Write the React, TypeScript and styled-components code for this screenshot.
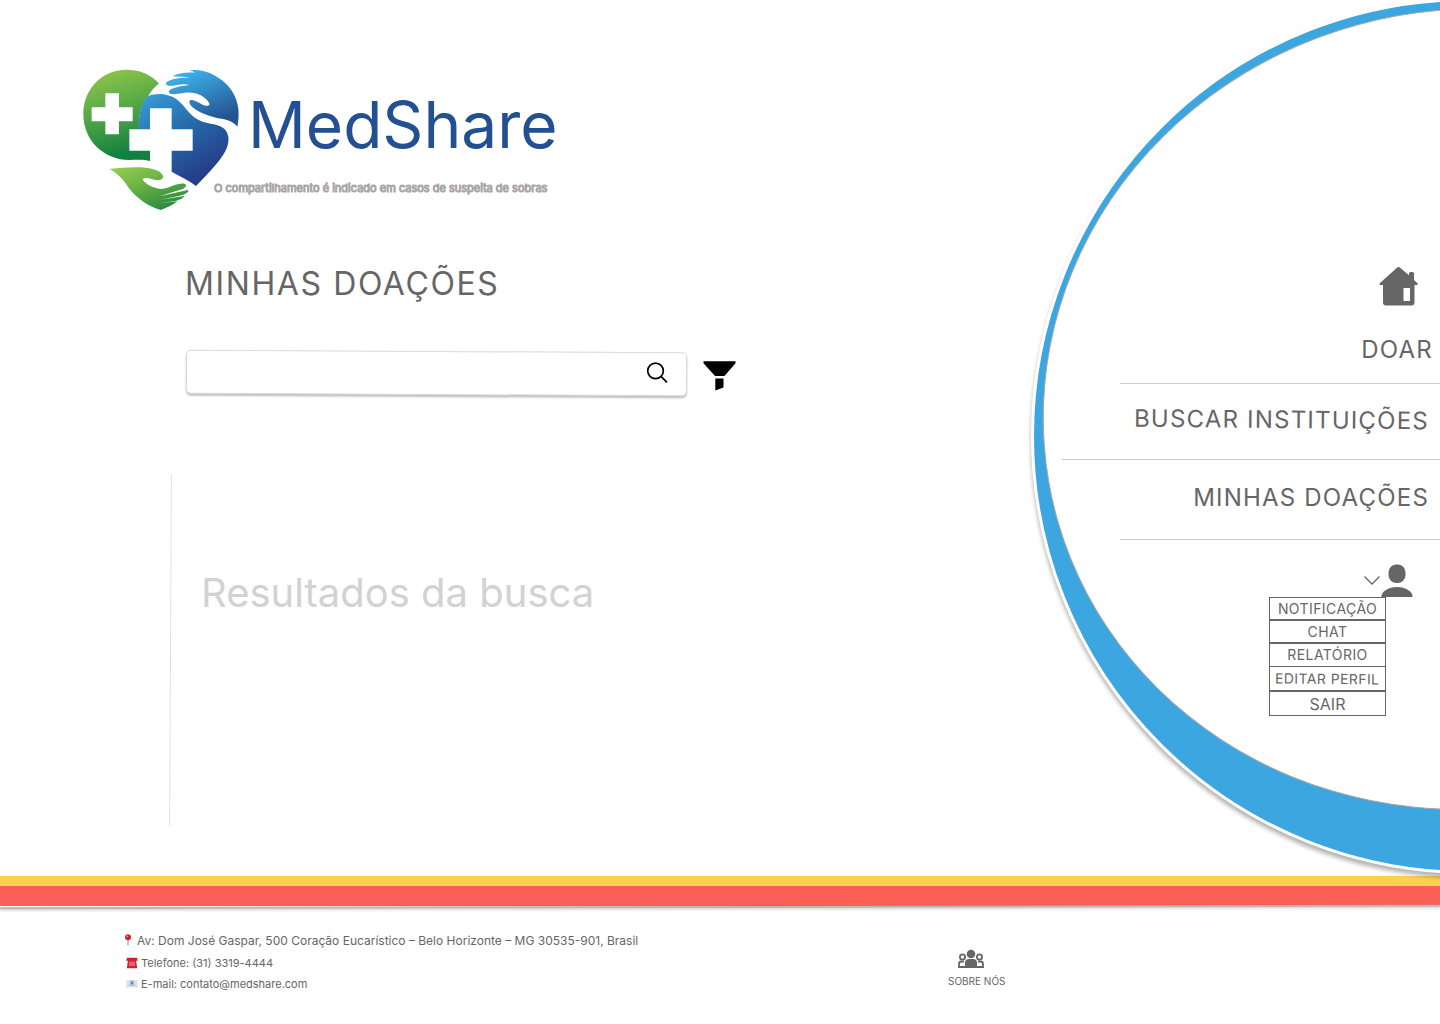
import React from "react";
import styled, { createGlobalStyle } from "styled-components";

const GlobalStyle = createGlobalStyle`
  * { box-sizing: border-box; }
  body { margin: 0; background: #fff; color: #666; font-family: Inter, "Liberation Sans", sans-serif; }
  h1, h2, p, ul, address { margin: 0; padding: 0; font-weight: 400; font-style: normal; }
  ul { list-style: none; }
  a { color: inherit; text-decoration: none; }
`;

const Page = styled.div`
  min-height: 100vh;
  display: flex;
  flex-direction: column;
  overflow: hidden;
`;

const Body = styled.div`
  flex: 1;
  display: flex;
  justify-content: space-between;
`;

const Main = styled.main`
  flex: 1;
  display: flex;
  flex-direction: column;
  padding: 60px 0 50px 70px;
`;

const Brand = styled.header`
  position: relative;
  display: flex;
  align-items: flex-start;
`;

const BrandName = styled.h1`
  margin-top: 25px;
  font-size: 64px;
  line-height: 80px;
  color: #234f93;
`;

const Tagline = styled.p`
  position: absolute;
  left: 144px;
  top: 120px;
  font-size: 11px;
  line-height: 16px;
  white-space: nowrap;
  color: #aaa6a5;
  -webkit-text-stroke: 1px #aaa6a5;
`;

const Title = styled.h2`
  margin: 44px 0 0 115px;
  font-size: 32px;
  line-height: 40px;
  letter-spacing: 0.05em;
`;

const SearchForm = styled.form`
  display: flex;
  align-items: center;
  gap: 16px;
  margin: 47px 0 0 116px;
`;

const SearchBox = styled.div`
  display: flex;
  align-items: center;
  width: 501px;
  height: 44px;
  padding: 0 16px;
  background: #fff;
  border: 1px solid #d9d9d9;
  border-radius: 5px;
  box-shadow: 0 2px 2px rgba(0, 0, 0, 0.25);
  transform: rotate(0.3deg);
`;

const SearchInput = styled.input`
  flex: 1;
  min-width: 0;
  border: 0;
  outline: 0;
  background: transparent;
  font: 16px Inter, sans-serif;
  color: #666;
`;

const IconButton = styled.button`
  display: flex;
  padding: 0;
  border: 0;
  background: none;
  cursor: pointer;
`;

const Results = styled.section`
  position: relative;
  flex: 1;
  margin: 79px 0 0 100px;
  padding: 95px 0 0 31px;
  min-height: 352px;

  &::before {
    content: "";
    position: absolute;
    left: 0;
    top: 0;
    bottom: 0;
    border-left: 1px solid #e2e2e2;
    transform: rotate(0.3deg);
  }
`;

const ResultsText = styled.p`
  font-size: 40px;
  line-height: 48px;
  color: #d2d2d2;
`;

const Side = styled.aside`
  position: relative;
  z-index: 1;
  width: 378px;
  flex-shrink: 0;
  padding-top: 264px;
`;

const Disc = styled.div`
  position: absolute;
  z-index: -1;
  top: -2px;
  right: -467px;
  width: 876px;
  height: 876px;
  border: 3px solid #fff;
  border-radius: 50%;
  background: #3ca6e0;
  box-shadow: 0 4px 4px rgba(0, 0, 0, 0.3);

  &::after {
    content: "";
    position: absolute;
    left: 8px;
    top: 8px;
    width: 850px;
    height: 798px;
    border: 1px solid #a5a5a5;
    border-radius: 50%;
    background: #fff;
    transform: rotate(-10deg);
  }
`;

const Nav = styled.nav`
  display: flex;
  flex-direction: column;
  align-items: flex-end;
`;

const HomeLink = styled.a`
  display: flex;
  height: 56px;
  margin-right: 20px;
`;

const NavItem = styled.a<{ $wide?: boolean; $height: number; $end?: number }>`
  display: flex;
  align-items: center;
  justify-content: flex-end;
  width: ${(p) => (p.$wide ? 378 : 320)}px;
  height: ${(p) => p.$height}px;
  padding: 0 ${(p) => p.$end ?? 11}px 4px 0;
  border-bottom: 1px solid #cbcbcb;
  font-size: 24px;
  line-height: 32px;
  letter-spacing: 0.05em;
  white-space: nowrap;
`;

const Tilt = styled.span`
  transform: rotate(0.5deg);
`;

const UserButton = styled(IconButton)`
  align-items: center;
  margin: 24px 27px 0 0;
`;

const UserMenu = styled.ul`
  display: grid;
  grid-template-rows: 23px 23px 23px 25px 25px;
  width: 117px;
  margin-right: 54px;
`;

const MenuItem = styled.li<{ $joined?: boolean; $large?: boolean }>`
  display: flex;
  align-items: center;
  justify-content: center;
  border: 1px solid #666;
  border-bottom-width: ${(p) => (p.$joined ? 0 : 1)}px;
  font-size: ${(p) => (p.$large ? 16 : 14)}px;
  line-height: 16px;
  letter-spacing: ${(p) => (p.$large ? "0" : "0.03em")};
  white-space: nowrap;
`;

const Stripe = styled.div<{ $color: string; $height: number }>`
  height: ${(p) => p.$height}px;
  background: ${(p) => p.$color};
`;

const Edge = styled.div`
  height: 2px;
  background: #b9b7b7;
  box-shadow: 0 1px 3px rgba(0, 0, 0, 0.25);
  transform: rotate(-0.1deg);
`;

const Footer = styled.footer`
  display: grid;
  grid-template-columns: 1fr 492px;
  padding: 23px 0 32px;
`;

const Contact = styled.address`
  display: flex;
  flex-direction: column;
  gap: 5px;
  padding-left: 123px;
`;

const ContactLine = styled.p<{ $small?: boolean }>`
  display: flex;
  align-items: center;
  gap: ${(p) => (p.$small ? 3 : 4)}px;
  padding-left: ${(p) => (p.$small ? 3 : 0)}px;
  font-size: ${(p) => (p.$small ? 11 : 12)}px;
  line-height: ${(p) => (p.$small ? 16 : 19)}px;
  white-space: nowrap;
`;

const About = styled.a`
  display: flex;
  flex-direction: column;
  justify-self: start;
  gap: 4px;
  padding-top: 18px;
  font-size: 10px;
  line-height: 16px;

  svg {
    margin-left: 10px;
  }
`;

function Logo() {
  return (
    <svg width="178" height="160" viewBox="0 0 534 480" aria-hidden="true">
      <defs>
        <linearGradient id="leaf" x1="0" y1="0" x2="0.25" y2="1">
          <stop offset="0.1" stopColor="#8bc34a" />
          <stop offset="0.5" stopColor="#56a946" />
          <stop offset="1" stopColor="#128040" />
        </linearGradient>
        <linearGradient id="sea" x1="0" y1="0" x2="0.6" y2="1">
          <stop offset="0" stopColor="#3a9fdc" />
          <stop offset="0.5" stopColor="#2669a8" />
          <stop offset="1" stopColor="#243a87" />
        </linearGradient>
        <linearGradient id="sky" x1="0" y1="0" x2="0.5" y2="1">
          <stop offset="0.2" stopColor="#3cabe3" />
          <stop offset="1" stopColor="#235391" />
        </linearGradient>
        <linearGradient id="palm" x1="0" y1="0" x2="0.7" y2="1">
          <stop offset="0" stopColor="#98cf52" />
          <stop offset="0.5" stopColor="#68b045" />
          <stop offset="1" stopColor="#268a3e" />
        </linearGradient>
      </defs>
      <path
        fill="url(#leaf)"
        d="M267 70C241 42 208 29 168 29C96 29 40 88 40 162C40 243 103 300 178 300C204 299 224 298 240 303V272H178V208H207C205 165 214 132 235 108C244 92 253 82 267 70Z"
      />
      <path
        fill="url(#sea)"
        d="M235 108C264 97 300 101 325 122C349 142 359 169 394 184C426 196 468 190 475 230C479 269 452 302 378 378C356 360 330 350 305 335V272H368V208H305V145H240V208H207C205 165 212 130 235 108Z"
      />
      <path fill="#fff" d="M106 100H147V142H188V184H147V223H106V184H65V142H106Z" />
      <path
        fill="url(#sky)"
        d="M502 201C514 144 500 95 455 60C427 40 398 26 358 31C366 33 372 35 374 38C350 36 325 39 308 49C325 51 342 50 360 53C330 52 294 57 287 70C289 79 302 79 320 75C336 72 350 73 358 75C332 78 298 84 296 96C299 106 318 102 340 99C375 93 406 108 418 130C421 139 409 140 395 133C382 126 371 117 360 121C354 128 363 140 378 149C400 163 430 172 455 176C476 180 496 188 502 201Z"
      />
      <path
        fill="url(#palm)"
        d="M118 327C147 323 170 323 195 322C228 321 267 326 278 345C283 357 271 362 258 360C243 357 229 350 218 357C223 372 249 384 274 387C298 386 318 369 343 371C354 375 346 385 331 389L268 409L354 390C360 394 347 403 330 407L270 419L343 408C341 415 325 421 310 424L270 430L322 424C310 434 292 443 272 450C237 441 196 412 174 381C163 361 144 341 118 327Z"
      />
    </svg>
  );
}

function PinIcon() {
  return (
    <svg width="10" height="14" viewBox="0 0 10 14" aria-hidden="true">
      <path d="M4.400 4h1.200v6.500L5 12l-.6-1.500z" fill="#9b9b9b" />
      <circle cx="5" cy="3.200" r="3" fill="#d3232f" />
      <circle cx="4.200" cy="2.300" r="0.900" fill="#f2848b" />
    </svg>
  );
}

function PhoneIcon() {
  return (
    <svg width="12" height="12" viewBox="0 0 12 12" aria-hidden="true">
      <path d="M1 .7h10l.8 3.100H9.500V3h-7v.8H.2z" fill="#d32030" />
      <path d="M2 3h8l1.200 8.300H.8z" fill="#d32030" />
      <path d="M4 4.500v4.500M6 4.500v4.500M8 4.500v4.500" stroke="#f6c6c9" strokeWidth="0.800" />
    </svg>
  );
}

function MailIcon() {
  return (
    <svg width="12" height="10" viewBox="0 0 12 10" aria-hidden="true">
      <rect x="0.500" y="1" width="11" height="7.500" fill="#dfe1e2" />
      <path d="M.5 8.500 4 5M11.500 8.500 8 5" stroke="#bcc2c6" strokeWidth="0.600" />
      <rect x="4" y="1.500" width="4" height="5.500" fill="#9dbfe0" />
      <circle cx="6" cy="4" r="1.100" fill="#4a80bd" />
    </svg>
  );
}

export default function App() {
  return (
    <Page>
      <GlobalStyle />
      <Body>
        <Main>
          <Brand>
            <Logo />
            <BrandName>MedShare</BrandName>
            <Tagline>O compartilhamento é indicado em casos de suspeita de sobras</Tagline>
          </Brand>
          <Title>MINHAS DOAÇÕES</Title>
          <SearchForm onSubmit={(e) => e.preventDefault()}>
            <SearchBox>
              <SearchInput type="search" aria-label="Buscar doações" />
              <IconButton type="submit" aria-label="Buscar">
                <svg width="24" height="24" viewBox="0 0 24 24" fill="none" stroke="#000" strokeWidth="1.700">
                  <circle cx="9.500" cy="8.700" r="7.800" />
                  <path d="m15 14.200 6 6" />
                </svg>
              </IconButton>
            </SearchBox>
            <IconButton type="button" aria-label="Filtrar">
              <svg width="34" height="36" viewBox="0 0 34 36" fill="#000">
                <path d="M.5 6.300h32v2L21.500 21h-9.500L.5 8.300zM12.300 23.500H20.500v9l-8.200 3z" />
              </svg>
            </IconButton>
          </SearchForm>
          <Results>
            <ResultsText>Resultados da busca</ResultsText>
          </Results>
        </Main>
        <Side>
          <Disc />
          <Nav>
            <HomeLink href="#" aria-label="Início">
              <svg width="44" height="44" viewBox="0 0 44 44" fill="#666">
                <path
                  fillRule="evenodd"
                  d="M21.500 3.300q1-.7 2 0l9.500 8V9.500q0-1.500 1.500-1.500h2q1.500 0 1.500 1.500v6.500l3.500 3.200q1 1.300-.5 1.800H38.500V38.500q0 3-3 3H10q-3 0-3-3V21H4.500q-2-.5-.5-2zM27.500 24v13H34V24z"
                />
              </svg>
            </HomeLink>
            <NavItem href="#" $height={64} $end={7}>DOAR</NavItem>
            <NavItem href="#" $height={76} $wide><Tilt>BUSCAR INSTITUIÇÕES</Tilt></NavItem>
            <NavItem href="#" $height={80}>MINHAS DOAÇÕES</NavItem>
            <UserButton type="button" aria-label="Menu do usuário">
              <svg width="18" height="12" viewBox="0 0 18 12" fill="none" stroke="#666" strokeWidth="1.300">
                <path d="m1.500 1.500 7.500 7.500 7.500-7.500" />
              </svg>
              <svg width="32" height="33" viewBox="0 0 32 33" fill="#666">
                <rect x="7.500" y="0.500" width="17" height="18.500" rx="8" />
                <path d="M.5 33v-1.500C2 26 9 23 16 23s14 3 15.500 8.500V33z" />
              </svg>
            </UserButton>
            <UserMenu>
              <MenuItem><a href="#">NOTIFICAÇÃO</a></MenuItem>
              <MenuItem><a href="#">CHAT</a></MenuItem>
              <MenuItem $joined><a href="#">RELATÓRIO</a></MenuItem>
              <MenuItem><Tilt><a href="#">EDITAR PERFIL</a></Tilt></MenuItem>
              <MenuItem $large><a href="#">SAIR</a></MenuItem>
            </UserMenu>
          </Nav>
        </Side>
      </Body>
      <Stripe $color="#f7d14f" $height={10} />
      <Stripe $color="#fa6056" $height={20} />
      <Edge />
      <Footer>
        <Contact>
          <ContactLine><PinIcon />Av: Dom José Gaspar, 500 Coração Eucarístico – Belo Horizonte – MG 30535-901, Brasil</ContactLine>
          <ContactLine $small><PhoneIcon />Telefone: (31) 3319-4444</ContactLine>
          <ContactLine $small><MailIcon />E-mail: contato@medshare.com</ContactLine>
        </Contact>
        <About href="#">
          <svg width="26" height="20" viewBox="0 0 26 20" fill="#666">
            <circle cx="13" cy="5" r="4.300" />
            <path d="M7 19v-5q0-4 4-4h4q4 0 4 4v5z" />
            <g fill="none" stroke="#666" strokeWidth="1.800">
              <circle cx="4.500" cy="8" r="2.600" />
              <circle cx="21.500" cy="8" r="2.600" />
              <path d="M7 18H1v-3q0-2.500 2.500-2.500H6M19 18h6v-3q0-2.500-2.500-2.500H20" />
            </g>
          </svg>
          SOBRE NÓS
        </About>
      </Footer>
    </Page>
  );
}
